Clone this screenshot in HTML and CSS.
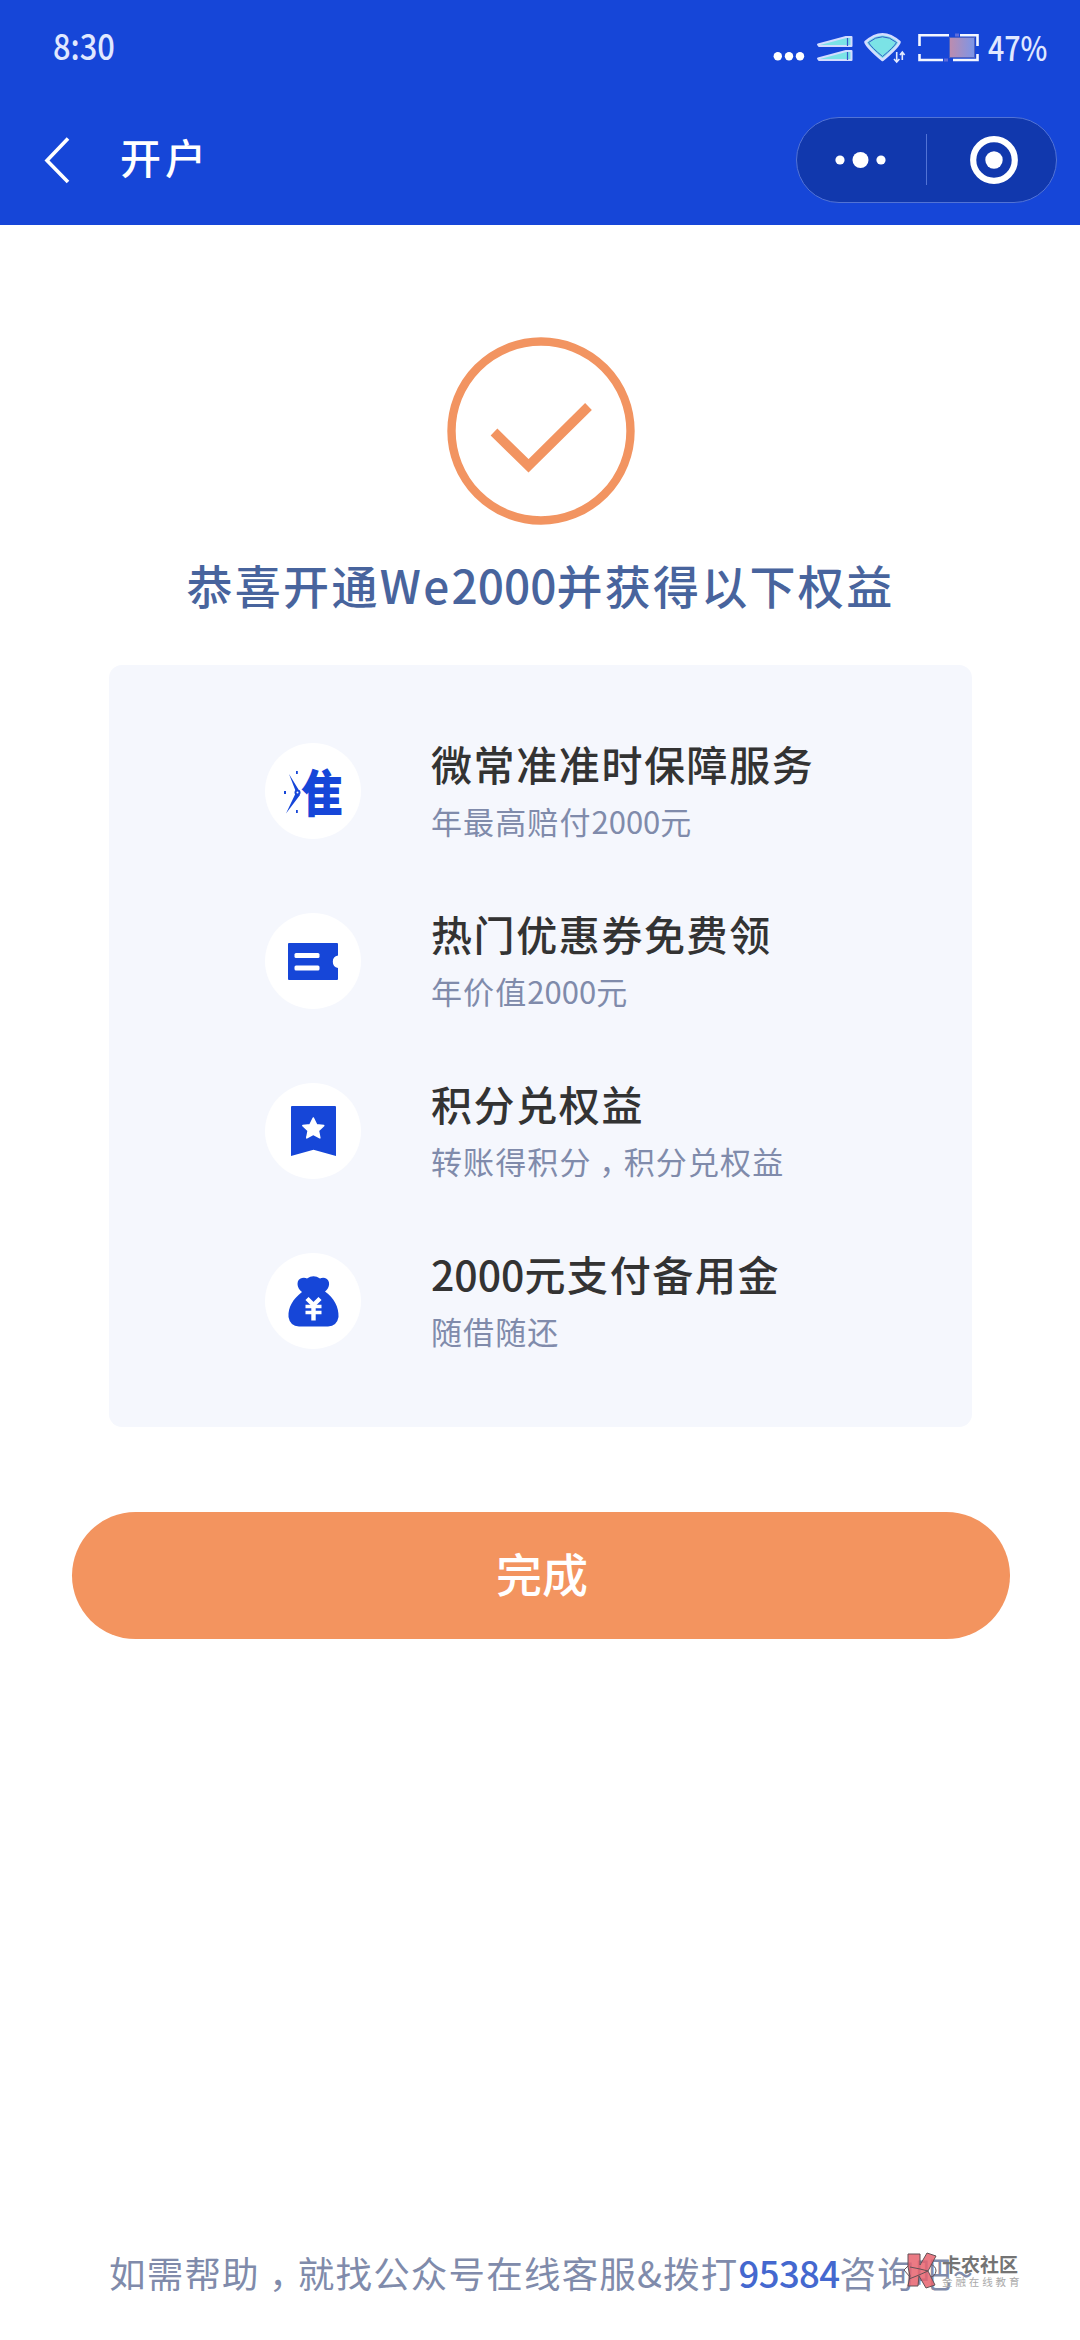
FILE: index.html
```html
<!DOCTYPE html>
<html lang="zh-CN">
<head>
<meta charset="utf-8">
<title>开户</title>
<link rel="stylesheet" href="styles.css">
</head>
<body>
<div class="page">
  <header class="header">
    <div class="status">
      <span class="time">8:30</span>
      <svg class="status-icons" width="210" height="36" viewBox="770 30 210 36">
        <g fill="#fff"><circle cx="777.8" cy="56.3" r="4.2"/><circle cx="789" cy="56.3" r="4.2"/><circle cx="800" cy="56.3" r="4.2"/></g>
        <g fill="#7be3e6" stroke="#d3ddff" stroke-width="2" stroke-linejoin="round">
          <path d="M818 44.500L846 37h5.500v9H819z"/>
          <path d="M818 58.500L846 51h5.500v9H819z"/>
          <path d="M847.500 38v8M847.500 52v8" stroke="#3158c9" stroke-width="1.200"/>
        </g>
        <path d="M865.500 42Q882.500 26.500 899.500 42Q899 46 882.500 60Q866 46 865.500 42z" fill="#7be3e6" stroke="#d3ddff" stroke-width="2.600" stroke-linejoin="round"/>
        <path d="M868.500 42.500Q882.500 31 896.500 42.500Q894 47 882.500 56.500Q871 47 868.500 42.500z" fill="none" stroke="#3158c9" stroke-width="1"/>
        <path d="M896.700 52v10M894 59l2.700 3 2.700-3M902.300 60V52M900 55l2.300-3 2.300 3" fill="none" stroke="#e3eaff" stroke-width="1.600"/>
        <defs><linearGradient id="charge"><stop offset="0" stop-color="#bd8cae"/><stop offset="1" stop-color="#7b96e8"/></linearGradient></defs>
        <path d="M919.500 46V35.200H949M960 35.200H977.500V46M919.500 54V60H943M953 60H977.500V54" fill="none" stroke="#f4f7ff" stroke-width="2.600"/>
        <rect x="949.500" y="37.500" width="25" height="20" fill="url(#charge)" stroke="#5262bf"/>
        <path d="M956 33.500v3M958 33.500v3M945 58.500v3M947 58.500v3" stroke="#a692db"/>
      </svg>
      <span class="percent">47%</span>
    </div>
    <div class="nav">
      <svg class="back" width="26" height="48" viewBox="0 0 26 48"><path d="M24 2.500L3 24.500L24 46" fill="none" stroke="#fff" stroke-width="3.600"/></svg>
      <h1 class="nav-title">开户</h1>
      <div class="capsule">
        <svg width="52" height="18" viewBox="0 0 52 18" fill="#fff"><circle cx="5" cy="9" r="4.600"/><circle cx="25.500" cy="9" r="8"/><circle cx="46" cy="9" r="4.600"/></svg>
        <span class="divider"></span>
        <svg width="48" height="48" viewBox="0 0 48 48"><circle cx="24" cy="24" r="20.800" fill="none" stroke="#fff" stroke-width="6.200"/><circle cx="24" cy="24" r="8.700" fill="#fff"/></svg>
      </div>
    </div>
  </header>

  <main class="content">
    <svg class="success" width="188" height="188" viewBox="0 0 188 188" fill="none" stroke="#f29461">
      <circle cx="94" cy="94" r="89.500" stroke-width="8.400"/>
      <path d="M47 95L81.500 128.800L141.500 69.500" stroke-width="9.600"/>
    </svg>
    <h2 class="headline">恭喜开通We<span class="num">2000</span>并获得以下权益</h2>

    <section class="card">
      <div class="item">
        <span class="icon">
          <svg width="96" height="96" viewBox="0 0 96 96" fill="#1646d8">
            <path d="M24 31L33.500 46.500L31 49zM21 70.500L30.500 50.500L35 52z"/>
            <circle cx="32.500" cy="49.500" r="3"/><circle cx="32.500" cy="49.500" r="1" fill="#fff"/>
            <rect x="31" y="28" width="1.800" height="3"/><rect x="19" y="48" width="2" height="3"/><rect x="31" y="67" width="1.800" height="3"/>
            <text class="logo-text" transform="translate(36 68.500) scale(.84 1)">隹</text>
          </svg>
        </span>
        <div class="text"><h3>微常准准时保障服务</h3><p>年最高赔付<span class="num">2000</span>元</p></div>
      </div>
      <div class="item">
        <span class="icon">
          <svg width="96" height="96" viewBox="0 0 96 96">
            <path fill="#1646d8" d="M24 30H72a1 1 0 0 1 1 1V42.500a6.300 6.300 0 0 0 0 12.400V66a1 1 0 0 1-1 1H24a1 1 0 0 1-1-1V31a1 1 0 0 1 1-1z"/>
            <rect x="29.500" y="40" width="25" height="5" rx="1.500" fill="#fff"/><rect x="29.500" y="52.500" width="25" height="5" rx="1.500" fill="#fff"/>
          </svg>
        </span>
        <div class="text"><h3>热门优惠券免费领</h3><p>年价值<span class="num">2000</span>元</p></div>
      </div>
      <div class="item">
        <span class="icon">
          <svg width="96" height="96" viewBox="0 0 96 96">
            <path fill="#1646d8" d="M27 23H70a1 1 0 0 1 1 1V73L48.500 66.700L26 73V24a1 1 0 0 1 1-1z"/>
            <path fill="#fff" stroke="#fff" stroke-width="1.600" stroke-linejoin="round" d="M48.300 35l3.200 6.700 7.200.9-5.300 5 1.400 7.200-6.500-3.500-6.500 3.500 1.400-7.200-5.300-5 7.200-.9z"/>
          </svg>
        </span>
        <div class="text"><h3>积分兑权益</h3><p>转账得积分<span class="comma">，</span>积分兑权益</p></div>
      </div>
      <div class="item">
        <span class="icon">
          <svg width="96" height="96" viewBox="0 0 96 96">
            <path fill="#1646d8" d="M37 39C31 35 31 26 37 25Q40 24.500 42 25.500Q48.500 21 55 25.500Q57 24.500 60 25C66 27 65 35 60 38.500C69 45 74 54 73.500 64Q72 73 63 73.500H34Q25 73 23.500 64C23 54 28 46 37 39z"/>
            <path fill="none" stroke="#fff" stroke-width="4.400" d="M42 45.500L48.500 52L55 45.500M48.500 51.500V67.500"/>
            <path stroke="#fff" stroke-width="3.600" d="M40.500 53.500H56.500M40.500 59.500H56.500"/>
          </svg>
        </span>
        <div class="text"><h3><span class="num">2000</span>元支付备用金</h3><p>随借随还</p></div>
      </div>
    </section>

    <button class="done" type="button">完成</button>
  </main>

  <footer class="footer">
    <p class="help">如需帮助<span class="comma">，</span>就找公众号在线客服&amp;拨打<a class="phone">95384</a>咨询吧~</p>
    <div class="watermark">
      <svg width="36" height="37" viewBox="0 0 36 37" stroke="#625156" stroke-width="1">
        <path fill="none" d="M7 12L1 18l6 7M27 12q6 2 6 7q-1 6-6 6"/>
        <path fill="#e8636f" fill-opacity=".85" d="M5 2h12v11L24 1l9 3-8 15 7 14-9 3-7-12-1 10H5l2-10-2-9z"/>
        <path fill="none" d="M7 15l10 2 8 2-9 4-10 4"/>
      </svg>
      <div class="brand"><strong>卡农社区</strong><span>金融在线教育</span></div>
    </div>
  </footer>
</div>
</body>
</html>
```

FILE: styles.css
```css
* { box-sizing: border-box; }
body, h1, h2, h3, p { margin: 0; }
body {
  background: #fff;
  font-family: "Noto Sans CJK SC", "Noto Sans", sans-serif;
}
.page {
  width: 1080px;
  height: 2340px;
  display: flex;
  flex-direction: column;
  overflow: hidden;
  position: relative;
}
.header { height: 225px; background: #1646d8; color: #fff; }
.status {
  height: 94px;
  padding: 0 0 0 53px;
  display: flex;
  align-items: center;
  color: #e0e8ff;
  font-weight: 500;
}
.time { font-size: 35px; line-height: 50px; width: 70px; transform: scaleX(.88); transform-origin: left; margin-bottom: 5px; }
.status-icons { margin-left: 647px; margin-top: 2px; flex: none; }
.percent { font-size: 34px; line-height: 50px; margin-left: 8px; width: 70px; transform: scaleX(.84); transform-origin: left; margin-bottom: 1px; }
.nav { height: 131px; padding: 0 23px 0 44px; display: flex; align-items: center; }
.back { margin-top: 1px; }
.nav-title { margin: 0 0 7px 50px; font-size: 41px; letter-spacing: 4px; font-weight: 500; line-height: 60px; }
.capsule {
  width: 261px;
  height: 86px;
  margin-left: auto;
  border: 1px solid #5273d5;
  border-radius: 43px;
  background: #1138ad;
  display: flex;
  align-items: center;
  padding: 0 38px;
  justify-content: space-between;
}
.divider { width: 1px; height: 51px; background: #5273d5; margin-left: 2px; margin-right: 6px; }
.content { flex: 1; display: flex; flex-direction: column; align-items: center; padding: 112px 0 0 1px; }
.success { flex: none; }
.headline {
  margin-top: 25px;
  height: 68px;
  line-height: 68px;
  font-size: 46px;
  letter-spacing: 2.300px;
  font-weight: 500;
  color: #48649d;
  white-space: nowrap;
}
.headline .num { letter-spacing: 0; }
.card {
  margin-top: 47px;
  width: 863px;
  height: 762px;
  padding: 78px 0 0 156px;
  border-radius: 13px;
  background: #f5f7fd;
  display: flex;
  flex-direction: column;
  gap: 74px;
}
.item { display: flex; height: 96px; gap: 70px; }
.icon { width: 96px; height: 96px; border-radius: 50%; background: #fff; flex: none; }
.icon svg { display: block; }
.logo-text { font-size: 50px; font-weight: 900; }
.text { display: flex; flex-direction: column; white-space: nowrap; margin-top: -12px; }
.text h3 { height: 64px; line-height: 64px; font-size: 41px; letter-spacing: 1.600px; font-weight: 500; color: #333; }
.text p { height: 52px; line-height: 52px; font-size: 31px; letter-spacing: 1.100px; color: #808bab; }
.text .num { letter-spacing: 0; }
.comma { display: inline-block; width: 1.04em; text-align: center; font-feature-settings: "halt"; }
.done {
  margin-top: 85px;
  width: 938px;
  height: 127px;
  border: 0;
  border-radius: 64px;
  background: #f3945f;
  color: #fff;
  font: 500 46px/120px "Noto Sans CJK SC", sans-serif;
  padding: 0 0 8px 3px;
  flex: none;
}
.footer { height: 110px; padding-left: 109px; }
.help { font-size: 36.500px; letter-spacing: 1.200px; line-height: 86px; color: #808bab; white-space: nowrap; }
.phone { color: #4468cf; font-weight: 500; letter-spacing: -.6px; }
.watermark { position: absolute; left: 903px; top: 2252px; display: flex; gap: 3px; }
.brand { display: flex; flex-direction: column; white-space: nowrap; }
.brand strong { font-size: 19px; line-height: 23px; font-weight: 700; color: #747474; }
.brand span { font-size: 10.500px; line-height: 13px; letter-spacing: 2.900px; color: #aaa; }
```
